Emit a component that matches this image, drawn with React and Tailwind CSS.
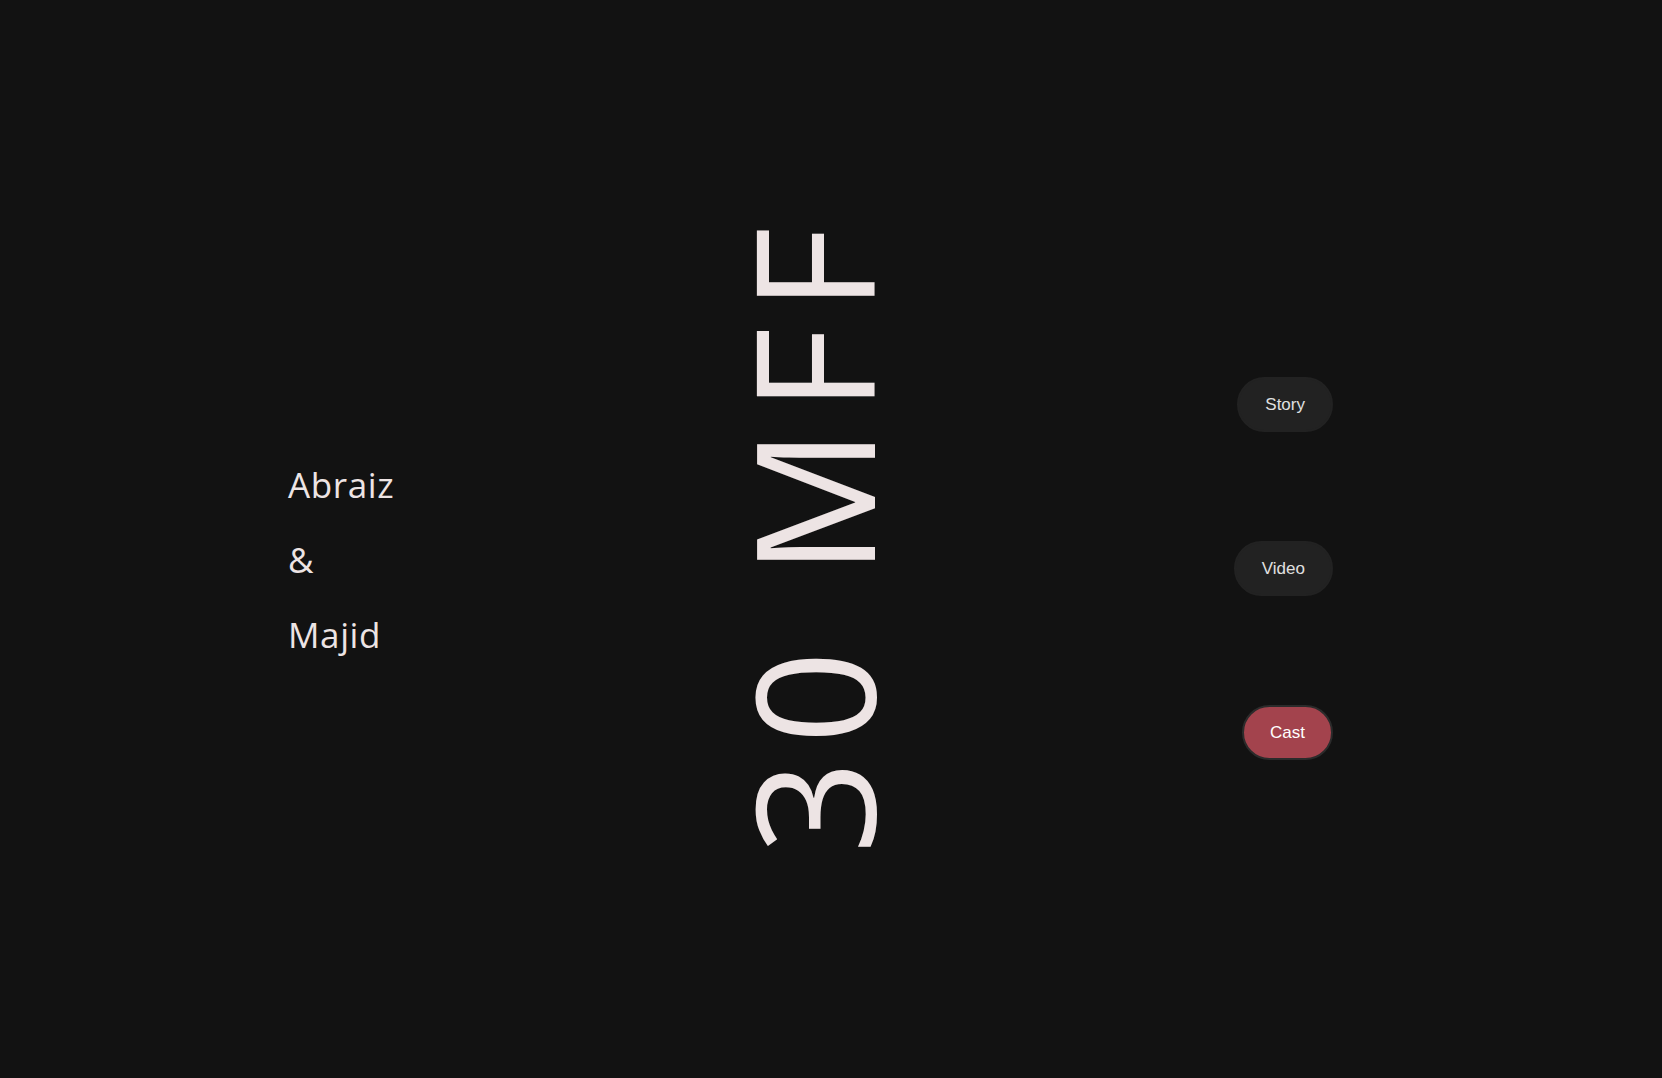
export default function App() {
  const names = ["Abraiz", "&", "Majid"];
  const links = [
    { label: "Story", active: false },
    { label: "Video", active: false },
    { label: "Cast", active: true },
  ];

  return (
    <div className="h-[1078px] w-full overflow-hidden bg-[#121212] text-[#ede4e4]">
      <div className="grid h-full grid-cols-3 items-center pl-[288px] pr-[329px]">
        {/* Names */}
        <div className="mt-[41px] flex flex-col font-['Open_Sans',sans-serif] text-[35px] tracking-[0.6px]">
          {names.map((n) => (
            <p key={n} className="leading-[75px]">
              {n}
            </p>
          ))}
        </div>

        {/* Title */}
        <div className="-mt-[14px] flex justify-center pl-[4px]">
          <h1 className="rotate-180 font-['Open_Sans',sans-serif] text-[164px] font-normal leading-none tracking-[16px] [writing-mode:vertical-rl]">
            30 MFF
          </h1>
        </div>

        {/* Nav */}
        <div className="mt-[59px] flex flex-col items-end gap-[109px] font-['Liberation_Sans',Arial,sans-serif] text-[17px]">
          {links.map((l) => (
            <button
              key={l.label}
              className={
                l.active
                  ? "rounded-full border-2 border-[#2b2b2b] bg-[#a3434d] px-[26px] py-4 leading-[19px] text-white"
                  : "rounded-full border-2 border-[#222222] bg-[#222222] px-[26px] py-4 leading-[19px] text-[#e0e0e0]"
              }
            >
              {l.label}
            </button>
          ))}
        </div>
      </div>
    </div>
  );
}
